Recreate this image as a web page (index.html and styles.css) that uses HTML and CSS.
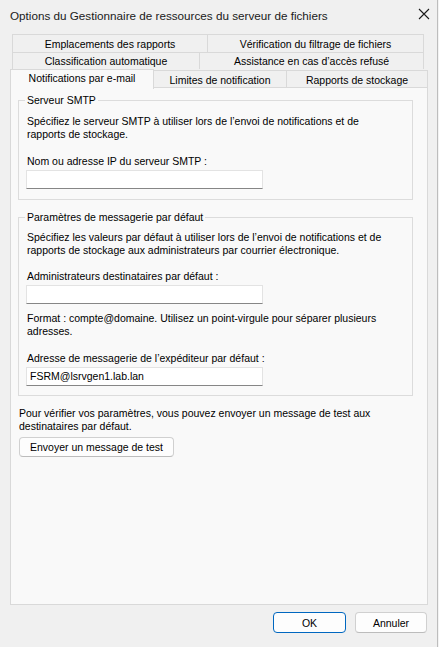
FILE: index.html
```html
<!DOCTYPE html>
<html lang="fr">
<head>
    <meta charset="UTF-8">
    <title>Options du Gestionnaire de ressources du serveur de fichiers</title>
    <link rel="stylesheet" href="styles.css">
</head>
<body>
    <div class="window">
        <div class="titlebar">
            <span class="title">Options du Gestionnaire de ressources du serveur de fichiers</span>
            <svg class="close" width="12" height="12" viewBox="0 0 12 12">
                <path d="M1 1 L11 11 M11 1 L1 11" stroke="#1a1a1a" stroke-width="1.1" fill="none"/>
            </svg>
        </div>

        <div class="tabs">
            <div class="tab-row row1">
                <div class="tab">Emplacements des rapports</div>
                <div class="tab">Vérification du filtrage de fichiers</div>
            </div>
            <div class="tab-row row2">
                <div class="tab">Classification automatique</div>
                <div class="tab">Assistance en cas d’accès refusé</div>
            </div>
            <div class="tab-row row3">
                <div class="tab selected">Notifications par e-mail</div>
                <div class="tab">Limites de notification</div>
                <div class="tab">Rapports de stockage</div>
            </div>
        </div>

        <div class="panel">
            <fieldset class="group smtp">
                <legend>Serveur SMTP</legend>
                <p class="desc">Spécifiez le serveur SMTP à utiliser lors de l’envoi de notifications et de<br>rapports de stockage.</p>
                <label class="field-label">Nom ou adresse IP du serveur SMTP :</label>
                <div class="input"></div>
            </fieldset>

            <fieldset class="group defaults">
                <legend>Paramètres de messagerie par défaut</legend>
                <p class="desc">Spécifiez les valeurs par défaut à utiliser lors de l’envoi de notifications et de<br>rapports de stockage aux administrateurs par courrier électronique.</p>
                <label class="field-label first">Administrateurs destinataires par défaut :</label>
                <div class="input"></div>
                <p class="desc hint">Format : compte@domaine. Utilisez un point-virgule pour séparer plusieurs<br>adresses.</p>
                <label class="field-label">Adresse de messagerie de l’expéditeur par défaut :</label>
                <div class="input">FSRM@lsrvgen1.lab.lan</div>
            </fieldset>

            <p class="desc test-note">Pour vérifier vos paramètres, vous pouvez envoyer un message de test aux<br>destinataires par défaut.</p>
            <button class="btn test-btn">Envoyer un message de test</button>
        </div>

        <div class="footer">
            <button class="btn default">OK</button>
            <button class="btn">Annuler</button>
        </div>
    </div>
</body>
</html>
```

FILE: styles.css
```css
body {
    margin: 0;
    background-color: #f3f3f3;
    font-family: 'Liberation Sans', Arial, sans-serif;
    font-size: 10.5px;
    color: #000;
}
.window {
    width: 437px;
    height: 647px;
    background-color: #f0f0f0;
    border-right: 1px solid #bdbdbd;
    display: flex;
    flex-direction: column;
}
.titlebar {
    height: 30px;
    display: flex;
    align-items: center;
    justify-content: space-between;
    padding: 0 7px 0 10px;
}
.title {
    font-size: 11.7px;
    color: #1a1a1a;
}
.close {
    margin-top: -2px;
}
.tabs {
    margin-top: 4px;
    margin-left: 10px;
    width: 418px;
}
.tab-row {
    display: grid;
}
.row1 {
    grid-template-columns: 195px 216px;
    padding-left: 3px;
    height: 18px;
}
.row2 {
    grid-template-columns: 187px 224px;
    padding-left: 3px;
    height: 17px;
}
.row3 {
    grid-template-columns: 144px 133px 141px;
    height: 18px;
    align-items: end;
}
.tab {
    border: 1px solid #d9d9d9;
    border-bottom: none;
    margin-left: -1px;
    background-color: #f0f0f0;
    display: flex;
    align-items: center;
    justify-content: center;
    height: 100%;
    box-sizing: border-box;
    white-space: nowrap;
}
.row3 .tab {
    height: 18px;
    padding-top: 1px;
}
.row3 .tab.selected {
    height: 20px;
    margin-left: 0;
    margin-bottom: -1px;
    background-color: #f9f9f9;
    position: relative;
    z-index: 1;
    align-items: flex-start;
    padding-top: 2px;
}
.panel {
    margin-left: 10px;
    width: 418px;
    height: 518px;
    box-sizing: border-box;
    background-color: #f9f9f9;
    border: 1px solid #d9d9d9;
    padding: 6px 14px 0 7px;
}
.group {
    margin: 0;
    border: 1px solid #dcdcdc;
    padding: 0 8px 0 8px;
}
.group legend {
    padding: 0 2px;
    margin-left: -2px;
    line-height: 13px;
}
.desc {
    margin: 0;
    line-height: 13px;
    white-space: nowrap;
}
.smtp {
    height: 106px;
    box-sizing: border-box;
}
.smtp .desc {
    margin-top: 8px;
}
.field-label {
    display: block;
    line-height: 13px;
    margin-top: 14px;
}
.defaults .field-label.first {
    margin-top: 13px;
}
.input {
    width: 237px;
    height: 19px;
    box-sizing: border-box;
    margin-top: 2px;
    margin-left: -1px;
    background-color: #fff;
    border: 1px solid #e3e3e3;
    border-bottom-color: #868686;
    padding: 2px 0 0 3px;
    line-height: 13px;
}
.defaults {
    margin-top: 11px;
    height: 185px;
    box-sizing: border-box;
}
.defaults .desc {
    margin-top: 7px;
}
.defaults .hint {
    margin-top: 8px;
}
.test-note {
    margin-top: 11px;
    margin-left: 1px;
}
.btn {
    font-family: 'Liberation Sans', Arial, sans-serif;
    font-size: 10.5px;
    color: #000;
    background-color: #fdfdfd;
    border: 1px solid #d0d0d0;
    border-bottom-color: #bcbcbc;
    border-radius: 4px;
    height: 20px;
    padding: 0;
}
.test-btn {
    margin-top: 4px;
    margin-left: 1px;
    width: 155px;
    padding-bottom: 1px;
}
.footer {
    display: flex;
    justify-content: flex-end;
    gap: 9px;
    padding: 7px 10px 0 0;
}
.footer .btn {
    width: 72px;
    height: 21px;
}
.btn.default {
    width: 73px;
    border: 1px solid #0067c0;
}
```
